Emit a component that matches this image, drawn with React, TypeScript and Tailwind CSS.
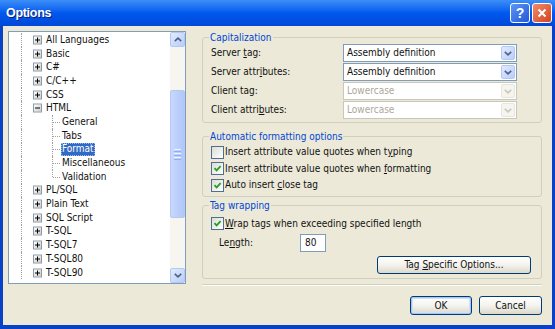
import React from "react";

const U = ({ children }: { children: React.ReactNode }) => (
  <span className="underline underline-offset-[1px]">{children}</span>
);

function PlusBox({ minus }: { minus?: boolean }) {
  return (
    <span className="absolute left-[24px] top-1/2 flex h-[9px] w-[9px] -translate-y-1/2 items-center justify-center border border-[#8A9AAE] bg-linear-to-br from-white to-[#CFCBBC]">
      <svg width="7" height="7" viewBox="0 0 7 7">
        <line x1="1" y1="3.5" x2="6" y2="3.5" stroke="#000" strokeWidth="1" />
        {!minus && <line x1="3.5" y1="1" x2="3.5" y2="6" stroke="#000" strokeWidth="1" />}
      </svg>
    </span>
  );
}

function RootRow({ label, minus }: { label: string; minus?: boolean }) {
  return (
    <div className="flex h-[13.7px] items-center">
      <div className="relative h-full w-[37px] shrink-0">
        <span className="absolute left-[12px] top-0 h-full border-l border-dotted border-[#A0A0A0]" />
        <PlusBox minus={minus} />
      </div>
      <span className="whitespace-nowrap leading-none">{label}</span>
    </div>
  );
}

function ChildRow({ label, last, selected }: { label: string; last?: boolean; selected?: boolean }) {
  return (
    <div className="flex h-[13.7px] items-center">
      <div className="relative h-full w-[53px] shrink-0">
        <span className="absolute left-[12px] top-0 h-full border-l border-dotted border-[#A0A0A0]" />
        {last ? (
          <span className="absolute left-[43px] top-0 h-1/2 border-l border-dotted border-[#A0A0A0]" />
        ) : (
          <span className="absolute left-[43px] top-0 h-full border-l border-dotted border-[#A0A0A0]" />
        )}
        <span className="absolute left-[44px] top-1/2 w-[7px] border-t border-dotted border-[#A0A0A0]" />
      </div>
      {selected ? (
        <span className="-ml-[1px] flex h-[13px] items-center bg-[#316AC5] px-[1px] leading-none text-white outline-1 -outline-offset-1 outline-dotted outline-[#9DB9E8]">
          {label}
        </span>
      ) : (
        <span className="whitespace-nowrap leading-none">{label}</span>
      )}
    </div>
  );
}

function Chevron({ up, color }: { up?: boolean; color: string }) {
  return (
    <svg width="8" height="5" viewBox="0 0 8 5">
      <path
        d={up ? "M0.8 4.2 L4 1.2 L7.2 4.2" : "M0.8 0.8 L4 3.8 L7.2 0.8"}
        fill="none"
        stroke={color}
        strokeWidth="1.6"
      />
    </svg>
  );
}

function ScrollButton({ up }: { up?: boolean }) {
  return (
    <div className="flex h-[15px] w-[15px] shrink-0 items-center justify-center rounded-[2px] border border-[#B4C8F6] bg-linear-to-br from-[#E2EBFE] to-[#B9CDF9]">
      <Chevron up={up} color="#4D6185" />
    </div>
  );
}

function Combo({ value, disabled }: { value: string; disabled?: boolean }) {
  return (
    <div
      className={
        disabled
          ? "flex h-[18px] w-[174px] items-center border border-[#C9C7BA] bg-white p-[1px] text-[#ACA899]"
          : "flex h-[18px] w-[174px] items-center border border-[#7F9DB9] bg-white p-[1px]"
      }
    >
      <span className="flex-1 pl-[2px] leading-none">{value}</span>
      {disabled ? (
        <span className="flex h-full w-[14px] items-center justify-center rounded-[2px] border border-[#E8E6DC] bg-[#F5F4EF]">
          <Chevron color="#C9C7BA" />
        </span>
      ) : (
        <span className="flex h-full w-[14px] items-center justify-center rounded-[2px] border border-[#B4C8F6] bg-linear-to-br from-[#E2EBFE] to-[#B9CDF9]">
          <Chevron color="#4D6185" />
        </span>
      )}
    </div>
  );
}

function Check({ checked }: { checked?: boolean }) {
  return (
    <span className="flex h-[13px] w-[13px] shrink-0 items-center justify-center border border-[#4F6F91] bg-linear-to-br from-[#DCDCD7] to-white">
      {checked && (
        <svg width="9" height="9" viewBox="0 0 9 9">
          <path d="M1.5 4.2 L3.6 6.4 L7.6 2.2" fill="none" stroke="#21A121" strokeWidth="1.8" />
        </svg>
      )}
    </span>
  );
}

function CheckRow({ checked, children }: { checked?: boolean; children: React.ReactNode }) {
  return (
    <div className="flex h-[16.5px] items-center gap-[1px]">
      <Check checked={checked} />
      <span className="whitespace-nowrap leading-none">{children}</span>
    </div>
  );
}

function XPButton({ children, primary, className }: { children: React.ReactNode; primary?: boolean; className: string }) {
  return (
    <div
      className={
        primary
          ? `flex items-center justify-center rounded-[3px] border border-[#003C74] bg-linear-to-b from-white via-[#F4F3EE] to-[#DCD8CB] shadow-[inset_0_0_0_1px_#A8C6F0,inset_0_0_0_2px_#CFE0FA] ${className}`
          : `flex items-center justify-center rounded-[3px] border border-[#003C74] bg-linear-to-b from-white via-[#F4F3EE] to-[#DCD8CB] ${className}`
      }
    >
      <span className="whitespace-nowrap leading-none">{children}</span>
    </div>
  );
}

export default function App() {
  return (
    <div className="flex h-[329px] w-[555px] flex-col overflow-hidden font-['DejaVu_Sans_Condensed','DejaVu_Sans',sans-serif] text-[10px] text-[#111]">
      {/* Title bar */}
      <div className="flex h-[26px] shrink-0 items-center bg-linear-to-b from-[#3C8EF8] via-[#0058EE] to-[#0048D8] pl-[6px] pr-[3px]">
        <span className="flex-1 font-['Liberation_Sans',Arial,sans-serif] text-[12.5px] font-bold tracking-[-0.3px] text-white [text-shadow:1px_1px_0_#0A1E80]">
          Options
        </span>
        <div className="flex gap-[2px]">
          <div className="flex h-[20px] w-[20px] items-center justify-center rounded-[3px] border border-white bg-linear-to-br from-[#5D95F5] to-[#2158D8] font-['Liberation_Sans',Arial,sans-serif] text-[14px] font-bold leading-none text-white">
            ?
          </div>
          <div className="flex h-[20px] w-[20px] items-center justify-center rounded-[3px] border border-white bg-linear-to-br from-[#F08A6A] to-[#D2401A]">
            <svg width="10" height="10" viewBox="0 0 10 10">
              <path d="M1.5 1.5 L8.5 8.5 M8.5 1.5 L1.5 8.5" stroke="#fff" strokeWidth="2" />
            </svg>
          </div>
        </div>
      </div>

      {/* Body */}
      <div className="flex flex-1 gap-[16px] border-x-[3px] border-b-[4px] border-[#0842C8] bg-[#ECE9D8] pl-[5px] pt-[5px]">
        {/* Tree */}
        <div className="flex h-[253px] w-[178px] shrink-0 border border-[#7F9DB9] bg-white">
          <div className="flex-1 overflow-hidden pt-[1px]">
            <RootRow label="All Languages" />
            <RootRow label="Basic" />
            <RootRow label="C#" />
            <RootRow label="C/C++" />
            <RootRow label="CSS" />
            <RootRow label="HTML" minus />
            <ChildRow label="General" />
            <ChildRow label="Tabs" />
            <ChildRow label="Format" selected />
            <ChildRow label="Miscellaneous" />
            <ChildRow label="Validation" last />
            <RootRow label="PL/SQL" />
            <RootRow label="Plain Text" />
            <RootRow label="SQL Script" />
            <RootRow label="T-SQL" />
            <RootRow label="T-SQL7" />
            <RootRow label="T-SQL80" />
            <RootRow label="T-SQL90" />
          </div>
          <div className="flex w-[15px] flex-col bg-[#F6F5F0]">
            <ScrollButton up />
            <div className="flex-1 pt-[43px]">
              <div className="flex h-[128px] flex-col items-center justify-center gap-[1px] rounded-[2px] border border-[#B4C8F6] bg-linear-to-r from-[#C9D8FC] via-[#BCCFFB] to-[#B2C7F8]">
                <span className="h-[1px] w-[7px] bg-[#EEF4FE]" />
                <span className="h-[1px] w-[7px] bg-[#8CB0F8]" />
                <span className="h-[1px] w-[7px] bg-[#EEF4FE]" />
                <span className="h-[1px] w-[7px] bg-[#8CB0F8]" />
                <span className="h-[1px] w-[7px] bg-[#EEF4FE]" />
                <span className="h-[1px] w-[7px] bg-[#8CB0F8]" />
              </div>
            </div>
            <ScrollButton />
          </div>
        </div>

        {/* Right column */}
        <div className="flex w-[340px] flex-col">
          <fieldset className="rounded-[3px] border border-[#D0D0BF]">
            <legend className="ml-[6px] px-[1px] leading-[13px] text-[#0046D5]">Capitalization</legend>
            <div className="flex flex-col gap-[1px] pb-[3px] pl-[8px] pr-[24px]">
              <div className="flex h-[18px] items-center">
                <span className="w-[132px] leading-none">
                  Server <U>t</U>ag:
                </span>
                <Combo value="Assembly definition" />
              </div>
              <div className="flex h-[18px] items-center">
                <span className="w-[132px] leading-none">
                  Server attr<U>i</U>butes:
                </span>
                <Combo value="Assembly definition" />
              </div>
              <div className="flex h-[18px] items-center">
                <span className="w-[132px] leading-none">Client tag:</span>
                <Combo value="Lowercase" disabled />
              </div>
              <div className="flex h-[18px] items-center">
                <span className="w-[132px] leading-none">
                  Client attri<U>b</U>utes:
                </span>
                <Combo value="Lowercase" disabled />
              </div>
            </div>
          </fieldset>

          <fieldset className="mt-[7px] rounded-[3px] border border-[#D0D0BF]">
            <legend className="ml-[6px] px-[1px] leading-[13px] text-[#0046D5]">Automatic formatting options</legend>
            <div className="flex flex-col pb-[2px] pl-[8px] pt-[1px]">
              <CheckRow>
                Insert attribute value quotes when t<U>y</U>ping
              </CheckRow>
              <CheckRow checked>
                Insert attribute value quotes when <U>f</U>ormatting
              </CheckRow>
              <CheckRow checked>
                Auto insert <U>c</U>lose tag
              </CheckRow>
            </div>
          </fieldset>

          <fieldset className="mt-[2px] rounded-[3px] border border-[#D0D0BF]">
            <legend className="ml-[6px] px-[1px] leading-[13px] text-[#0046D5]">Tag wrapping</legend>
            <div className="flex flex-col pb-[4px] pl-[8px] pr-[10px] pt-[4px]">
              <CheckRow checked>
                <U>W</U>rap tags when exceeding specified length
              </CheckRow>
              <div className="mt-[2px] flex h-[18px] items-center pl-[8px]">
                <span className="w-[81px] leading-none">
                  Le<U>n</U>gth:
                </span>
                <div className="flex h-[18px] w-[26px] items-center border border-[#7F9DB9] bg-white pl-[4px] leading-none">
                  80
                </div>
              </div>
              <div className="mt-[4px] flex justify-end">
                <XPButton className="h-[18px] w-[154px]">
                  Tag <U>S</U>pecific Options...
                </XPButton>
              </div>
            </div>
          </fieldset>

          <div className="mt-[5px] h-[2px] border-b border-t border-b-white border-t-[#D0D0BF]" />

          <div className="mt-[10px] flex justify-end gap-[7px]">
            <XPButton primary className="h-[19px] w-[62px]">
              OK
            </XPButton>
            <XPButton className="h-[19px] w-[63px]">Cancel</XPButton>
          </div>
        </div>
      </div>
    </div>
  );
}
